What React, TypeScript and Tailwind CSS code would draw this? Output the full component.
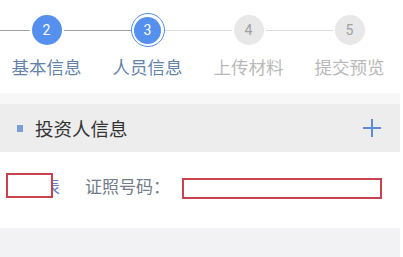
import React from "react";

const font = { fontFamily: '"Noto Sans CJK SC", "Noto Sans", sans-serif' };

type Step = { n: string; label: string; state: "done" | "active" | "todo"; left: string | null; right: string | null };

const DARK = "bg-[#a3a3a3]";
const LIGHT = "bg-[#dcdcdc]";

const steps: Step[] = [
  { n: "2", label: "基本信息", state: "done", left: DARK, right: DARK },
  { n: "3", label: "人员信息", state: "active", left: DARK, right: LIGHT },
  { n: "4", label: "上传材料", state: "todo", left: LIGHT, right: LIGHT },
  { n: "5", label: "提交预览", state: "todo", left: LIGHT, right: null },
];

function Circle({ s }: { s: Step }) {
  if (s.state === "active") {
    return (
      <div className="w-[34px] h-[34px] rounded-full border-[1.5px] border-[#4f8ded] flex items-center justify-center bg-white shrink-0">
        <div className="w-[27px] h-[27px] rounded-full bg-[#5590ef] flex items-center justify-center text-white text-[14px] leading-none" style={{ fontFamily: '"Roboto", sans-serif' }}>
          {s.n}
        </div>
      </div>
    );
  }
  if (s.state === "done") {
    return (
      <div className="w-[30px] h-[30px] mx-[2px] rounded-full bg-[#5590ef] flex items-center justify-center text-white text-[14px] leading-none shrink-0" style={{ fontFamily: '"Roboto", sans-serif' }}>
        {s.n}
      </div>
    );
  }
  return (
    <div className="w-[30px] h-[30px] mx-[2px] rounded-full bg-[#e8e8e8] flex items-center justify-center text-[#a0a0a0] text-[14px] leading-none shrink-0" style={{ fontFamily: '"Roboto", sans-serif' }}>
      {s.n}
    </div>
  );
}

export default function App() {
  return (
    <div className="w-[403px] h-[257px] bg-white overflow-hidden" style={font}>
      <div className="h-[93px] flex ml-[-4px] pt-[13px]">
        {steps.map((s) => (
          <div key={s.n} className="w-[101px] flex flex-col items-center">
            <div className="w-full h-[34px] flex items-center">
              <div className={`flex-1 h-px ${s.left ?? ""}`} />
              <Circle s={s} />
              <div className={`flex-1 h-px ${s.right ?? ""}`} />
            </div>
            <div
              className={`mt-[8px] text-[17.5px] leading-[24px] whitespace-nowrap ${
                s.state === "todo" ? "text-[#b9b9b9]" : "text-[#6383a8]"
              }`}
            >
              {s.label}
            </div>
          </div>
        ))}
      </div>
      <div className="w-[400px] h-[11px] bg-[#f7f7f7]" />
      <div className="w-[400px] h-[48px] bg-[#ededed] flex items-center justify-between pl-[17px] pr-[18px]">
        <div className="flex items-center">
          <div className="w-[6px] h-[7px] bg-[#7b9edb]" />
          <span className="ml-[12px] text-[18.5px] leading-[24px] text-[#333333]">投资人信息</span>
        </div>
        <svg width="20" height="20" viewBox="0 0 20 20">
          <path d="M10 1v18M1 10h18" stroke="#5b8dd6" strokeWidth="2" />
        </svg>
      </div>
      <div className="w-[400px] h-[76px] flex items-start">
        <div className="relative ml-[6px] mt-[21px] w-[54px] h-[25px]">
          <div className="absolute right-0 top-0 h-[25px] leading-[25px] text-[17px] text-[#5b83c4] whitespace-nowrap">代表</div>
          <div className="absolute left-0 top-0 w-[47px] h-[25px] border-2 border-[#c8424f] bg-white" />
        </div>
        <div className="ml-[25px] mt-[22px] w-[97px] text-[17px] leading-[24px] text-[#737d8a] whitespace-nowrap">证照号码：</div>
        <div className="mt-[26px] w-[200px] h-[21px] border-2 border-[#c8424f] bg-white" />
      </div>
      <div className="w-[400px] h-[29px] bg-[#f2f2f4]" />
    </div>
  );
}
